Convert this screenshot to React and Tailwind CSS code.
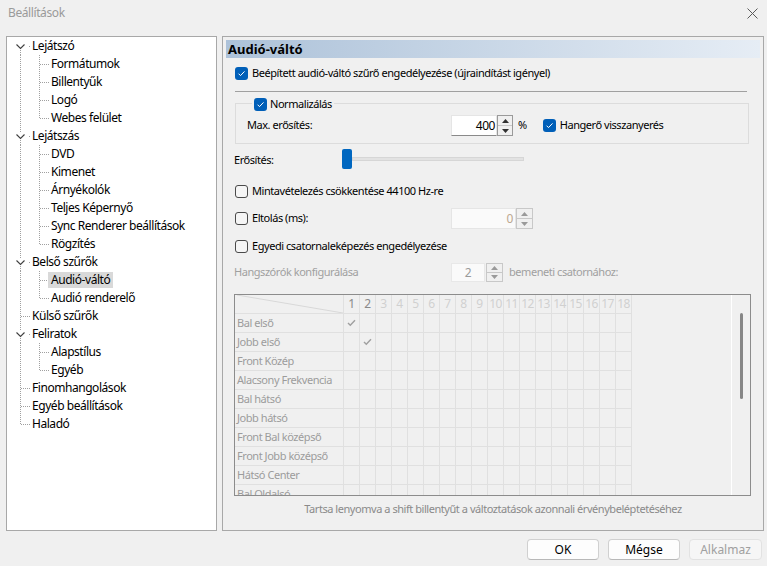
import React from "react";

const FONT = { fontFamily: '"Noto Sans", "Liberation Sans", sans-serif' };

const tree = [
  { l: 0, t: "Lejátszó", ch: true, first: true },
  { l: 1, t: "Formátumok" },
  { l: 1, t: "Billentyűk" },
  { l: 1, t: "Logó" },
  { l: 1, t: "Webes felület", last: true },
  { l: 0, t: "Lejátszás", ch: true },
  { l: 1, t: "DVD" },
  { l: 1, t: "Kimenet" },
  { l: 1, t: "Árnyékolók" },
  { l: 1, t: "Teljes Képernyő" },
  { l: 1, t: "Sync Renderer beállítások" },
  { l: 1, t: "Rögzítés", last: true },
  { l: 0, t: "Belső szűrők", ch: true },
  { l: 1, t: "Audió-váltó", sel: true },
  { l: 1, t: "Audió renderelő", last: true },
  { l: 0, t: "Külső szűrők" },
  { l: 0, t: "Feliratok", ch: true },
  { l: 1, t: "Alapstílus" },
  { l: 1, t: "Egyéb", last: true },
  { l: 0, t: "Finomhangolások" },
  { l: 0, t: "Egyéb beállítások" },
  { l: 0, t: "Haladó", last0: true },
];

const DOT = "#a0a0a0";

function TreeLines({ item }) {
  const w = item.l === 0 ? 25 : 44;
  return (
    <svg width={w} height="18" className="shrink-0" shapeRendering="crispEdges">
      {item.l === 0 && item.ch && (
        <>
          {!item.first && <line x1="13.5" y1="0" x2="13.5" y2="5" stroke={DOT} strokeDasharray="1 1" />}
          <line x1="13.5" y1="13" x2="13.5" y2="18" stroke={DOT} strokeDasharray="1 1" />
          <path d="M9.5 7.5 L13.5 11.5 L17.5 7.5" stroke="#404040" strokeWidth="1.1" fill="none" shapeRendering="geometricPrecision" />
          <rect x="22" y="9" width="1" height="1" fill={DOT} />
        </>
      )}
      {item.l === 0 && !item.ch && (
        <>
          <line x1="13.5" y1="0" x2="13.5" y2={item.last0 ? 10 : 18} stroke={DOT} strokeDasharray="1 1" />
          <line x1="14" y1="9.5" x2="24" y2="9.5" stroke={DOT} strokeDasharray="1 1" />
        </>
      )}
      {item.l === 1 && (
        <>
          <line x1="13.5" y1="0" x2="13.5" y2="18" stroke={DOT} strokeDasharray="1 1" />
          <line x1="32.5" y1="0" x2="32.5" y2={item.last ? 10 : 18} stroke={DOT} strokeDasharray="1 1" />
          <line x1="33" y1="9.5" x2="43" y2="9.5" stroke={DOT} strokeDasharray="1 1" />
        </>
      )}
    </svg>
  );
}

function Check({ checked }) {
  if (checked)
    return (
      <span className="w-[13px] h-[13px] rounded-[3px] bg-[#005fb8] flex items-center justify-center shrink-0">
        <svg width="9" height="9" viewBox="0 0 9 9">
          <path d="M1.6 4.7 L3.5 6.6 L7.5 2.4" stroke="white" strokeWidth="1" fill="none" />
        </svg>
      </span>
    );
  return <span className="w-[13px] h-[13px] rounded-[3px] border border-[#4a4a4a] bg-[#f5f5f5] shrink-0" />;
}

function SpinButtons({ disabled, w = 16 }) {
  const c = disabled ? "#9a9a9a" : "#303030";
  const b = disabled ? "border-[#c8c8c8]" : "border-[#9a9a9a]";
  return (
    <div className={`flex flex-col h-full border ${b} bg-[#f0f0f0]`} style={{ width: w }}>
      <div className="flex-1 flex items-center justify-center border-b border-[#c8c8c8]">
        <svg width="7" height="4"><path d="M0 4 L3.5 0 L7 4 Z" fill={c} /></svg>
      </div>
      <div className="flex-1 flex items-center justify-center">
        <svg width="7" height="4"><path d="M0 0 L3.5 4 L7 0 Z" fill={c} /></svg>
      </div>
    </div>
  );
}

const cols = Array.from({ length: 18 }, (_, i) => i + 1);
const rows = [
  ["Bal első", 1],
  ["Jobb első", 2],
  ["Front Közép", 0],
  ["Alacsony Frekvencia", 0],
  ["Bal hátsó", 0],
  ["Jobb hátsó", 0],
  ["Front Bal középső", 0],
  ["Front Jobb középső", 0],
  ["Hátsó Center", 0],
  ["Bal Oldalsó", 0],
];

function Grid() {
  return (
    <div className="ml-[11px] mt-[11px] w-[517px] h-[202px] border border-[#8c8c8c] bg-[#f0f0f0] flex overflow-hidden">
      <div className="w-[397px] shrink-0 flex flex-col">
        <div className="flex h-[19px] shrink-0">
          <div className="w-[109px] h-[19px] border-r border-b border-[#e0e0e0] shrink-0">
            <svg width="108" height="18"><line x1="2" y1="0" x2="108" y2="18" stroke="#d8d8d8" /></svg>
          </div>
          {cols.map((c) => (
            <div
              key={c}
              className={`w-[16px] h-[19px] border-r border-b border-[#e0e0e0] shrink-0 flex items-center justify-center text-[12px] tracking-[-0.6px] ${c <= 2 ? "text-[#8a8a8a]" : "text-[#d0d0d0]"}`}
            >
              {c}
            </div>
          ))}
        </div>
        {rows.map(([name, chk]) => (
          <div key={name} className="flex h-[19px] shrink-0">
            <div className="w-[109px] h-[19px] border-r border-b border-[#e0e0e0] shrink-0 pl-[2px] text-[#9c9c9c] leading-[18px] whitespace-nowrap overflow-hidden">
              {name}
            </div>
            {cols.map((c) => (
              <div key={c} className="w-[16px] h-[19px] border-r border-b border-[#e0e0e0] shrink-0 flex items-center justify-center">
                {chk === c && (
                  <svg width="9" height="8" viewBox="0 0 9 8">
                    <path d="M1 4 L3.3 6.3 L8 1.2" stroke="#a0a0a0" strokeWidth="1.4" fill="none" />
                  </svg>
                )}
              </div>
            ))}
          </div>
        ))}
      </div>
      <div className="w-[99px] shrink-0" />
      <div className="w-px bg-white shrink-0" />
      <div className="flex-1 flex justify-center">
        <div className="mt-[18px] w-[3px] h-[86px] rounded-full bg-[#868686]" />
      </div>
    </div>
  );
}

export default function App() {
  return (
    <div className="w-[767px] h-[566px] bg-[#f0f0f0] flex flex-col overflow-hidden text-[12px] text-black" style={FONT}>
      {/* title bar */}
      <div className="h-[36px] shrink-0 flex items-start justify-between">
        <div className="pl-[8px] pt-[4px] text-[12px] tracking-[-0.4px] text-[#9a9a9a] leading-[18px]">Beállítások</div>
        <div className="pr-[9px] pt-[8px]">
          <svg width="11" height="11" viewBox="0 0 11 11">
            <path d="M0.5 0.5 L10.5 10.5 M10.5 0.5 L0.5 10.5" stroke="#5a5a5a" strokeWidth="1" />
          </svg>
        </div>
      </div>

      <div className="flex h-[495px] shrink-0 pl-[6px] gap-[5px]">
        {/* tree */}
        <div className="w-[211px] h-full border border-[#a8a8a8] bg-white shrink-0 tracking-[-0.45px]">
          <div className="flex flex-col">
            {tree.map((it, i) => (
              <div key={i} className="flex h-[18px] items-center whitespace-nowrap">
                <TreeLines item={it} />
                <span className={`leading-[16px] ${it.sel ? "bg-[#d9d9d9] -ml-[3px] px-[3px]" : ""}`}>{it.t}</span>
              </div>
            ))}
          </div>
        </div>

        {/* right panel */}
        <div className="w-[542px] h-full border border-[#a8a8a8] shrink-0 flex flex-col text-[11px] tracking-[-0.45px] whitespace-nowrap">
          <div className="mt-[3px] mx-[3px] h-[18px] bg-gradient-to-r from-[#adc2d9] to-[#e6edf5] flex items-center pl-[2px]">
            <span className="font-bold text-[13px] tracking-normal leading-[18px]">Audió-váltó</span>
          </div>

          <div className="mt-[6px] h-[18px] pl-[12px] flex items-center gap-[4px]">
            <Check checked />
            <span>Beépített audió-váltó szűrő engedélyezése (újraindítást igényel)</span>
          </div>

          <div className="mt-[9px] ml-[12px] mr-[16px] h-px bg-[#a0a0a0]" />

          <div className="relative mt-[11px] ml-[12px] mr-[14px] border border-[#dcdcdc] pt-[11px] pb-[7px] pl-[11px]">
            <div className="absolute left-[16px] -top-[9px] h-[18px] px-[2px] bg-[#f0f0f0] flex items-center gap-[3px]">
              <Check checked />
              <span>Normalizálás</span>
            </div>
            <div className="flex items-center h-[21px]">
              <span className="w-[204px] shrink-0">Max. erősítés:</span>
              <div className="flex h-[21px]">
                <div className="w-[46px] h-full bg-white border border-[#e5e5e5] border-b-[#8a8a8a] flex items-center justify-end pr-[1px] text-[12px]">400</div>
                <SpinButtons w={16} />
              </div>
              <span className="ml-[5px]">%</span>
              <span className="ml-[16px] flex items-center gap-[4px]">
                <Check checked />
                <span>Hangerő visszanyerés</span>
              </span>
            </div>
          </div>

          <div className="mt-[5px] h-[20px] ml-[11px] flex items-center">
            <span className="w-[108px] shrink-0 pt-[2px]">Erősítés:</span>
            <div className="w-[10px] h-[20px] bg-[#0067c0] rounded-[2px] shrink-0" />
            <div className="w-[172px] h-[4px] bg-[#e2e2e2] border border-[#d6d6d6]" />
          </div>

          <div className="mt-[13px] h-[18px] pl-[12px] flex items-center gap-[4px]">
            <Check />
            <span>Mintavételezés csökkentése 44100 Hz-re</span>
          </div>

          <div className="mt-[8px] h-[21px] pl-[12px] flex items-center">
            <Check />
            <span className="ml-[4px] w-[199px] shrink-0">Eltolás (ms):</span>
            <div className="flex h-[21px]">
              <div className="w-[65px] h-full bg-[#fafafa] border border-[#e5e5e5] flex items-center justify-end pr-[2px] text-[12px] text-[#bca78f]">0</div>
              <SpinButtons disabled w={17} />
            </div>
          </div>

          <div className="mt-[8px] h-[18px] pl-[12px] flex items-center gap-[4px]">
            <Check />
            <span>Egyedi csatornaleképezés engedélyezése</span>
          </div>

          <div className="mt-[7px] h-[21px] pl-[11px] flex items-center text-[#a0a0a0]">
            <span className="w-[217px] shrink-0">Hangszórók konfigurálása</span>
            <div className="flex h-[19px]">
              <div className="w-[34px] h-full bg-[#fafafa] border border-[#e8e8e8] flex items-center justify-center text-[12px] text-[#9a9a9a]">2</div>
              <div className="w-[1px]" />
              <SpinButtons disabled w={17} />
            </div>
            <span className="ml-[6px]">bemeneti csatornához:</span>
          </div>

          <Grid />

          <div className="mt-[4px] h-[18px] flex items-center justify-center text-[#8a8a8a]">
            Tartsa lenyomva a shift billentyűt a változtatások azonnali érvénybeléptetéséhez
          </div>
        </div>
      </div>

      <div className="mt-[8px] flex justify-end gap-[9px] pr-[5px]">
        <button className="w-[72px] h-[21px] bg-[#fdfdfd] border border-[#d0d0d0] border-b-[#b8b8b8] rounded-[4px] text-[12px] leading-none">OK</button>
        <button className="w-[72px] h-[21px] bg-[#fdfdfd] border border-[#d0d0d0] border-b-[#b8b8b8] rounded-[4px] text-[12px] leading-none">Mégse</button>
        <button className="w-[73px] h-[21px] bg-[#f6f6f6] border border-[#e2e2e2] rounded-[4px] text-[12px] text-[#a0a0a0] leading-none">Alkalmaz</button>
      </div>
    </div>
  );
}
